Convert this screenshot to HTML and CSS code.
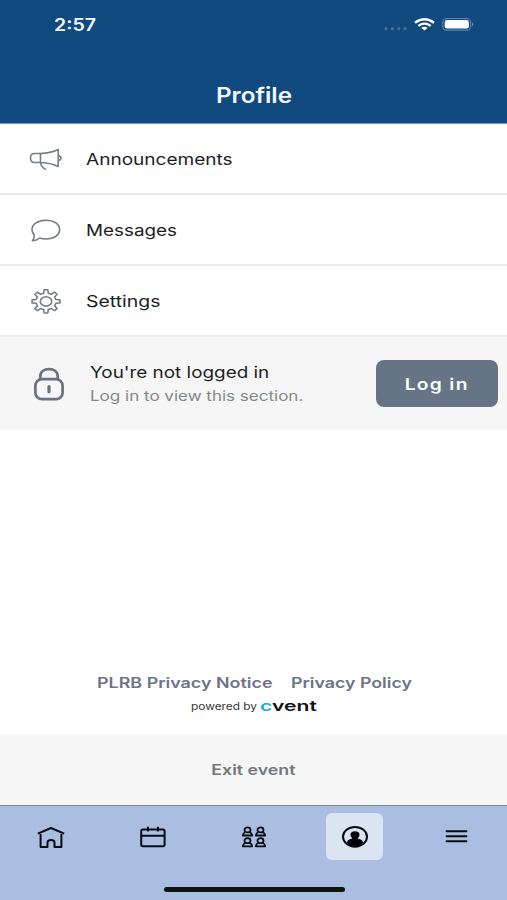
FILE: index.html
```html
<!DOCTYPE html>
<html lang="en">
<head>
<meta charset="utf-8">
<title>Profile</title>
<link rel="stylesheet" href="styles.css">
</head>
<body>
<div class="app">
  <header class="header">
    <div class="status">
      <span class="time wide">2:57</span>
      <svg class="status-icons" width="92" height="20" viewBox="0 0 92 20">
        <g fill="#42719d"><circle cx="3" cy="13.7" r="1.6"/><circle cx="9.3" cy="13.7" r="1.6"/><circle cx="15.7" cy="13.7" r="1.6"/><circle cx="22" cy="13.7" r="1.6"/></g>
        <g fill="none" stroke="#fff" stroke-width="2.3"><path d="M32 7.7Q41.5 .7 51 7.7"/><path d="M35.3 10.9Q41.5 6.4 47.7 10.9"/></g>
        <path d="M38.3 12.7Q41.5 10.8 44.7 12.7L41.5 15.4Z" fill="#fff"/>
        <rect x="59.8" y="3.5" width="27.8" height="11.6" rx="3.6" fill="none" stroke="#5d86ad" stroke-width="1.1"/>
        <rect x="61.7" y="5.1" width="24.2" height="8.5" rx="2.3" fill="#fff"/>
        <path d="M89 7.3Q91.5 9.3 89 11.3Z" fill="#6f94b6"/>
      </svg>
    </div>
    <h1 class="title"><span class="wide">Profile</span></h1>
  </header>

  <nav class="menu">
    <a class="row">
      <svg class="row-icon" width="34" height="26" viewBox="0 0 34 26">
        <path d="M11.5 7.5H5.5Q1.5 7.5 1.5 12T5.5 16.5H11.5M11.5 7.5V16.5M11.5 7.5Q21 7.4 29.2 3.6V20.4Q21 16.8 11.5 16.5M11.5 16.5Q12 21 16.5 23.2M29.2 9.7Q32 9.7 32 12T29.2 14.3"/>
      </svg>
      <span class="label wide">Announcements</span>
    </a>
    <a class="row">
      <svg class="row-icon" width="34" height="26" viewBox="0 0 34 26">
        <path d="M17 3.2C25 3.2 30.6 7.1 30.6 12.6C30.6 18.2 25 22 17 22Q13.5 22 10.7 21Q7.7 23.6 3.3 23.7Q5.7 21.2 5.2 18Q3 15.6 3 12.6C3 7.1 9 3.2 17 3.2Z"/>
      </svg>
      <span class="label messages wide">Messages</span>
    </a>
    <a class="row">
      <svg class="row-icon" width="34" height="26" viewBox="0 0 34 26">
        <path class="gear" transform="translate(17 13.4) scale(1.2 1)" d="M-1.9-8.2L-1.5-11.6H1.5L1.9-8.2L4.45-7.15L7.14-9.26L9.26-7.14L7.15-4.45L8.2-1.9L11.6-1.5V1.5L8.2 1.9L7.15 4.45L9.26 7.14L7.14 9.26L4.45 7.15L1.9 8.2L1.5 11.6H-1.5L-1.9 8.2L-4.45 7.15L-7.14 9.26L-9.26 7.14L-7.15 4.45L-8.2 1.9L-11.6 1.5V-1.5L-8.2-1.9L-7.15-4.45L-9.26-7.14L-7.14-9.26L-4.45-7.15Z"/>
        <ellipse cx="17" cy="13.4" rx="5.7" ry="4.7"/>
      </svg>
      <span class="label settings wide">Settings</span>
    </a>
  </nav>

  <section class="login">
    <svg class="lock" width="32" height="36" viewBox="0 0 32 36">
      <g fill="none" stroke="#697280" stroke-width="2.7">
        <rect x="2.4" y="13.2" width="27.2" height="20" rx="6.5"/>
        <path d="M7.3 13.5V10.5C7.3 5.8 11 3.2 16 3.2S24.7 5.8 24.7 10.5V13.5"/>
      </g>
      <path d="M16 20.7V25.7" stroke="#697280" stroke-width="3.2" stroke-linecap="round"/>
    </svg>
    <div class="login-text">
      <div class="login-title"><span class="wide">You're not logged in</span></div>
      <div class="login-sub"><span class="wide">Log in to view this section.</span></div>
    </div>
    <button class="login-button"><span class="wide">Log in</span></button>
  </section>

  <main class="space"></main>

  <footer class="legal">
    <div class="links"><a class="notice"><span class="wide">PLRB Privacy Notice</span></a><a class="policy"><span class="wide">Privacy Policy</span></a></div>
    <div class="powered"><span class="by wide">powered by</span><span class="brand wide"><b>c</b>vent</span></div>
  </footer>

  <div class="exit"><span class="wide">Exit event</span></div>

  <nav class="tabs">
    <a class="tab"><svg width="30" height="26" viewBox="0 0 30 26">
      <path d="M1.8 9.6L15 4L28.2 9.6M4.6 8.7V22.9H11.5V18.6Q11.5 16.1 15 16.1T18.5 18.6V22.9H25.4V8.7"/>
    </svg></a>
    <a class="tab"><svg width="30" height="26" viewBox="0 0 30 26">
      <rect x="4.2" y="5.4" width="23.4" height="16.8" rx="1.6"/><path d="M4.2 11.7H27.6M10.9 2.8V7.6M20.9 2.8V7.6"/>
    </svg></a>
    <a class="tab"><svg class="people" width="30" height="26" viewBox="0 0 30 26">
      <defs><g id="person"><ellipse cx="5.5" cy="3.2" rx="3" ry="2.5"/><path d="M3.2 5.2Q1 6.6 .8 8.8H10.2Q10 6.6 7.8 5.2"/></g></defs>
      <use href="#person" x="4" y="2.7"/><use href="#person" x="17" y="2.7"/><use href="#person" x="4" y="13.5"/><use href="#person" x="17" y="13.5"/>
    </svg></a>
    <a class="tab active"><svg width="30" height="26" viewBox="0 0 30 26">
      <ellipse cx="15" cy="12.8" rx="12" ry="9.9"/>
      <path class="solid" d="M15 7.2C18 7.2 19.5 8.6 19.5 10.8Q19.4 12.7 18.1 13.7V14.8Q22.5 15.4 23.1 18.6Q19.8 22.8 15 22.8T6.9 18.6Q7.5 15.4 11.9 14.8V13.7Q10.6 12.7 10.5 10.8C10.5 8.6 12 7.2 15 7.2Z"/>
    </svg></a>
    <a class="tab"><svg width="30" height="26" viewBox="0 0 30 26">
      <path d="M5.6 7.2H25.4M5.6 12.3H25.4M5.6 17.2H25.4" stroke-linecap="round"/>
    </svg></a>
    <div class="home-bar"></div>
  </nav>
</div>
</body>
</html>
```

FILE: styles.css
```css
* { box-sizing: border-box; }
body { margin: 0; font-family: Inter, "Liberation Sans", sans-serif; background: #fff; color: #1c1d1f; }
.app { width: 507px; height: 900px; display: flex; flex-direction: column; overflow: hidden; }
.wide { display: inline-block; white-space: nowrap; transform: scaleX(1.2); }

.header { height: 124px; background: #114a7e; color: #f4f8ff; border-bottom: 1px solid #7394b3; flex: none; }
.status { height: 48px; display: flex; align-items: center; justify-content: space-between; padding: 0 32px 0 54px; }
.time { font-size: 17px; font-weight: 600; transform: scaleX(1.15); transform-origin: left; margin-top: 2px; }
.status-icons { margin-top: 1px; }
.title { margin: 35px 0 0; font-size: 21px; line-height: 26px; font-weight: 600; text-align: center; }
.title .wide { transform: scaleX(1.155); }

.menu { flex: none; }
.row { height: 71px; display: flex; align-items: center; padding-left: 29px; border-bottom: 2px solid #ebebec; }
.row-icon { margin-right: 23px; fill: none; stroke: #777d84; stroke-width: 1.6; stroke-linejoin: round; stroke-linecap: round; }
.gear { vector-effect: non-scaling-stroke; }
.label { font-size: 16px; transform: scaleX(1.19); transform-origin: left; }
.messages { transform: scaleX(1.178); }
.settings { transform: scaleX(1.215); }

.login { height: 93px; flex: none; background: #f6f6f6; display: flex; align-items: center; padding: 0 9px 0 33px; }
.login-text { flex: 1; padding-left: 25px; }
.login-text .wide { transform-origin: left; }
.login-title { font-size: 16px; line-height: 24px; }
.login-title .wide { transform: scaleX(1.18); }
.login-sub { font-size: 14px; line-height: 24px; color: #85888c; }
.login-sub .wide { transform: scaleX(1.215); }
.login-button { width: 122px; height: 47px; border: 0; border-radius: 8px; background: #667486; color: #f8fbff; font: 600 16px Inter, sans-serif; letter-spacing: 1.1px; padding: 0; }

.space { flex: 1; }
.legal { height: 62px; flex: none; }
.links { display: flex; padding-left: 96.5px; font-size: 14.5px; line-height: 22px; font-weight: 600; color: #6c7489; }
.links .wide, .powered .wide { transform-origin: left; }
.links .notice .wide { transform: scaleX(1.235); }
.links .policy .wide { transform: scaleX(1.228); }
.notice { width: 194px; }
.powered { display: flex; height: 24px; line-height: 24px; padding-left: 191px; color: #111; }
.by { font-size: 10px; width: 69px; color: #333; }
.powered .by { transform: scaleX(1.185); }
.brand { font-size: 14px; font-weight: 600; }
.powered .brand { transform: scaleX(1.51); }
.brand b { color: #24aae1; font-weight: 600; }

.exit { height: 71px; flex: none; background: #f6f6f6; display: flex; align-items: center; justify-content: center; font-size: 14.5px; font-weight: 600; color: #73767b; }
.exit .wide { transform: scaleX(1.225); }

.tabs { height: 95px; flex: none; position: relative; background: #a9bee1; border-top: 1px solid #7d8795; display: grid; grid-template-columns: repeat(5, 1fr); justify-items: center; align-items: start; padding-top: 7px; }
.tab { width: 57px; height: 47px; display: flex; align-items: center; justify-content: center; border-radius: 6px; }
.tab svg { fill: none; stroke: #060c12; stroke-width: 2; stroke-linejoin: round; }
.tab .people { stroke-width: 1.8; }
.tab .solid { fill: #020407; stroke: none; }
.active { background: #dae4f2; }
.home-bar { position: absolute; left: 164px; bottom: 8px; width: 181px; height: 5px; border-radius: 3px; background: #11150f; }
```
